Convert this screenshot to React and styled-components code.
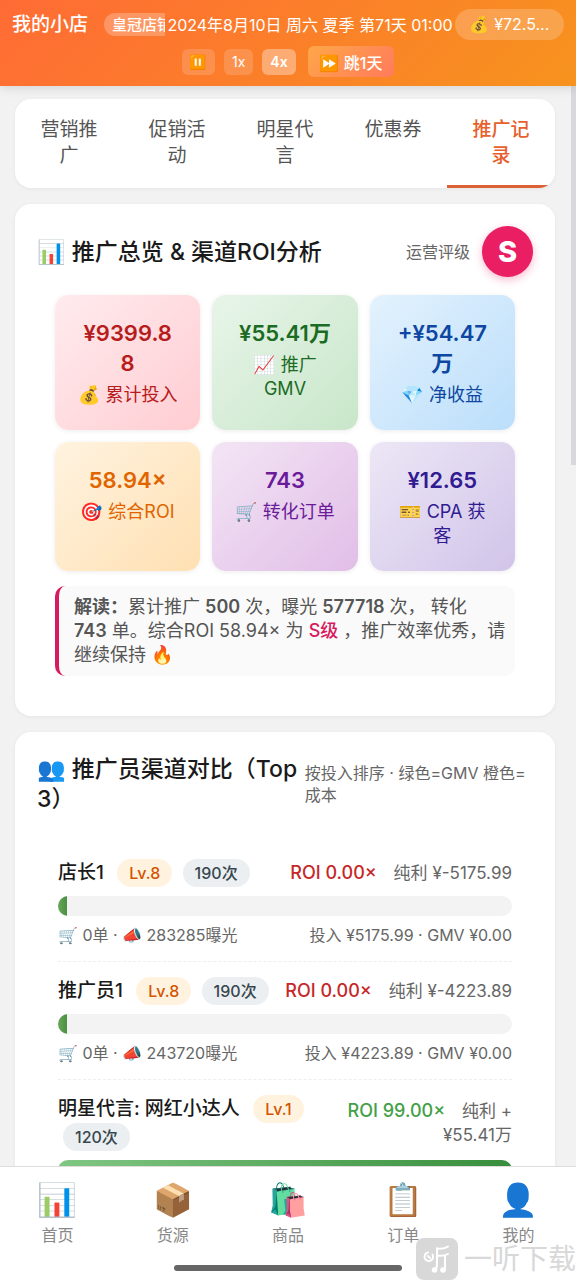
import React from 'react';
import styled, { createGlobalStyle } from 'styled-components';

const GlobalStyle = createGlobalStyle`
    * {
        box-sizing: border-box;
    }
    body {
        margin: 0;
        background: #f2f2f2;
        color: #1a1a1a;
        font-family: Inter, "Noto Sans CJK SC", "Noto Color Emoji", sans-serif;
    }
    button {
        font-family: inherit;
        border: none;
        cursor: pointer;
    }
    h1, h2, p, ul {
        margin: 0;
        padding: 0;
    }
`;

const Page = styled.div`
    height: 100vh;
    display: flex;
    flex-direction: column;
    position: relative;
`;

/* ---------- top bar ---------- */

const TopBar = styled.header`
    display: flex;
    flex-direction: column;
    gap: 6px;
    padding: 9px 12px;
    color: white;
    background: linear-gradient(135deg, #ff6b35, #f7931e);
    box-shadow: 0 2px 10px rgba(0, 0, 0, 0.12);
    z-index: 1;
`;

const ShopRow = styled.div`
    display: flex;
    align-items: center;
    height: 31px;
    white-space: nowrap;
`;

const ShopInfo = styled.div`
    flex: 1;
    min-width: 0;
    display: flex;
    align-items: center;
    gap: 16px;
    overflow: hidden;
`;

const ShopName = styled.h1`
    font-size: 19px;
    font-weight: 500;
    line-height: 24px;
`;

const ShopLevel = styled.span`
    padding: 0 8px;
    border-radius: 12px;
    font-size: 15px;
    font-weight: 500;
    line-height: 23px;
    background: rgba(255, 255, 255, 0.25);
`;

const Clock = styled.time`
    min-width: 290px;
    font-size: 16px;
    line-height: 24px;
    text-align: center;
`;

const Money = styled.div`
    width: 109px;
    border-radius: 16px;
    font-size: 16px;
    line-height: 31px;
    text-align: center;
    background: rgba(255, 255, 255, 0.2);
`;

const SpeedRow = styled.div`
    display: flex;
    align-items: center;
    justify-content: center;
    gap: 9px;
    height: 31px;
`;

const SpeedButton = styled.button`
    height: 26px;
    padding: 0 8px;
    border-radius: 6px;
    color: white;
    font-size: 14px;
    font-weight: ${(p) => (p.$active ? 600 : 400)};
    background: rgba(255, 255, 255, ${(p) => (p.$active ? 0.35 : 0.16)});
`;

const JumpButton = styled.button`
    height: 31px;
    margin-left: 3px;
    padding: 0 12px;
    border-radius: 6px;
    color: white;
    font-size: 16px;
    font-weight: 500;
    background: linear-gradient(135deg, #ffa748, #ff7a5c);
`;

/* ---------- content ---------- */

const Content = styled.main`
    flex: 1;
    min-height: 0;
    display: flex;
    flex-direction: column;
    gap: 16px;
    padding: 13px 21px 16px 15px;
    overflow-y: auto;
    scrollbar-width: none;
    > * {
        flex-shrink: 0;
    }
`;

const ScrollThumb = styled.div`
    position: absolute;
    top: 86px;
    right: 0;
    width: 5px;
    height: 379px;
    background: #d9d9db;
`;

const Tabs = styled.nav`
    display: flex;
    border-radius: 16px;
    overflow: hidden;
    background: white;
    box-shadow: 0 1px 4px rgba(0, 0, 0, 0.06);
`;

const Tab = styled.button`
    flex: 1;
    display: flex;
    justify-content: center;
    padding: 18px 22px 16px;
    color: ${(p) => (p.$active ? '#e8602c' : '#555')};
    font-size: 19px;
    font-weight: ${(p) => (p.$active ? 500 : 400)};
    line-height: 26px;
    background: none;
    border-bottom: 3px solid ${(p) => (p.$active ? '#dc6236' : 'transparent')};
`;

const Card = styled.section`
    padding: 22px;
    border-radius: 16px;
    background: white;
    box-shadow: 0 1px 4px rgba(0, 0, 0, 0.06);
`;

const CardHead = styled.div`
    display: flex;
    align-items: center;
    justify-content: space-between;
`;

const CardTitle = styled.h2`
    flex: 1;
    font-size: 23px;
    font-weight: 500;
    line-height: 30px;
`;

const Hint = styled.span`
    color: #666;
    font-size: 16px;
    line-height: 22px;
`;

const SideHint = styled(Hint)`
    flex-shrink: 0;
    max-width: 46%;
`;

const Rating = styled.div`
    display: flex;
    align-items: center;
    gap: 12px;
`;

const Grade = styled.strong`
    width: 51px;
    height: 51px;
    border-radius: 50%;
    color: white;
    font-size: 29px;
    font-weight: 800;
    line-height: 51px;
    text-align: center;
    background: #e91e63;
    box-shadow: 0 3px 8px rgba(233, 30, 99, 0.3);
`;

const CardBody = styled.div`
    padding: 18px;
`;

const StatGrid = styled.div`
    display: grid;
    grid-template-columns: repeat(3, 1fr);
    gap: 12px;
`;

const Stat = styled.div`
    display: flex;
    flex-direction: column;
    gap: 5px;
    padding: 23px 22px;
    border-radius: 14px;
    text-align: center;
    color: ${(p) => p.$color};
    background: linear-gradient(135deg, ${(p) => p.$from}, ${(p) => p.$to});
    box-shadow: 0 1px 5px rgba(0, 0, 0, 0.08);
`;

const StatValue = styled.div`
    padding: 0 3px;
    font-size: 22px;
    font-weight: 600;
    line-height: 30px;
    word-break: break-all;
`;

const StatLabel = styled.div`
    font-size: 18px;
    line-height: 24px;
`;

const Summary = styled.p`
    margin-top: 15px;
    padding: 9px 9px 9px 15px;
    border-left: 4px solid #d81b60;
    border-radius: 10px;
    color: #555;
    font-size: 18px;
    line-height: 24px;
    background: #fafafa;
    b {
        font-weight: 600;
    }
    em {
        color: #d81b60;
        font-style: normal;
        font-weight: 500;
    }
`;

/* ---------- promoter list ---------- */

const PromoterList = styled.ul`
    padding: 30px 21px 18px;
    list-style: none;
`;

const Promoter = styled.li`
    padding: 15px 0 14px;
    border-bottom: 1px dashed #eee;
`;

const PromoterHead = styled.div`
    display: flex;
    align-items: center;
    justify-content: space-between;
    gap: 4px;
    margin-bottom: 9px;
`;

const PromoterInfo = styled.div`
    font-size: 19px;
    line-height: 28px;
`;

const PromoterName = styled.span`
    margin-right: 3px;
    font-weight: 500;
`;

const Badge = styled.span`
    display: inline-block;
    margin-left: 5px;
    padding: 0 12px;
    border-radius: 14px;
    color: ${(p) => (p.$level ? '#d35400' : '#37474f')};
    font-size: 16px;
    font-weight: 500;
    background: ${(p) => (p.$level ? '#fff3e0' : '#eceff1')};
`;

const Profit = styled.div`
    color: #666;
    font-size: 17px;
    line-height: 24px;
    text-align: right;
`;

const Roi = styled.span`
    margin-right: 12px;
    color: ${(p) => (p.$good ? '#43a047' : '#c62828')};
    font-size: 18px;
    font-weight: 500;
`;

const Track = styled.div`
    height: 20px;
    border-radius: 10px;
    overflow: hidden;
    background: #f3f3f3;
`;

const Fill = styled.div`
    height: 100%;
    background: linear-gradient(90deg, ${(p) => (p.$good ? '#81c784, #388e3c' : '#66a858, #4b8f42')});
`;

const PromoterMeta = styled.div`
    display: flex;
    justify-content: space-between;
    margin-top: 7px;
    color: #666;
    font-size: 16px;
    line-height: 24px;
`;

/* ---------- bottom bar ---------- */

const BottomBar = styled.nav`
    display: flex;
    height: 114px;
    padding-top: 13px;
    border-top: 1px solid #ddd;
    background: white;
`;

const BottomLink = styled.a`
    flex: 1;
    display: flex;
    flex-direction: column;
    align-items: center;
    gap: 3px;
    color: #888;
    font-size: 16px;
    line-height: 24px;
    text-decoration: none;
`;

const BottomIcon = styled.span`
    font-size: 32px;
    line-height: 40px;
`;

const HomeIndicator = styled.div`
    position: absolute;
    bottom: 9px;
    left: 50%;
    width: 228px;
    height: 6px;
    margin-left: -114px;
    border-radius: 3px;
    background: #666;
`;

const Watermark = styled.div`
    position: absolute;
    right: 0;
    bottom: 0;
    display: flex;
    align-items: center;
    gap: 6px;
    color: #d8d8d8;
    font-size: 28px;
    line-height: 42px;
`;

const tabs = ['营销推广', '促销活动', '明星代言', '优惠券', '推广记录'];

const stats = [
    { value: '¥9399.88', label: '💰 累计投入', color: '#b71c1c', from: '#ffebee', to: '#ffcdd2' },
    { value: '¥55.41万', label: '📈 推广 GMV', color: '#1b6b24', from: '#e8f5e9', to: '#c8e6c9' },
    { value: '+¥54.47万', label: '💎 净收益', color: '#0d47a1', from: '#e3f2fd', to: '#bbdefb' },
    { value: '58.94×', label: '🎯 综合ROI', color: '#e06500', from: '#fff3e0', to: '#ffe0b2' },
    { value: '743', label: '🛒 转化订单', color: '#6a1b9a', from: '#f3e5f5', to: '#e1bee7' },
    { value: '¥12.65', label: '🎫 CPA 获客', color: '#311b92', from: '#ede7f6', to: '#d1c4e9' },
];

const promoters = [
    { name: '店长1', level: 8, times: 190, roi: '0.00', profit: '¥-5175.99', orders: 0, views: 283285, cost: '¥5175.99', gmv: '¥0.00', percent: 2 },
    { name: '推广员1', level: 8, times: 190, roi: '0.00', profit: '¥-4223.89', orders: 0, views: 243720, cost: '¥4223.89', gmv: '¥0.00', percent: 2 },
    { name: '明星代言: 网红小达人', level: 1, times: 120, roi: '99.00', profit: '+¥55.41万', percent: 100, good: true },
];

const links = [
    { icon: '📊', text: '首页' },
    { icon: '📦', text: '货源' },
    { icon: '🛍️', text: '商品' },
    { icon: '📋', text: '订单' },
    { icon: '👤', text: '我的' },
];

const PromoterRow = ({ item }) => (
    <Promoter>
        <PromoterHead>
            <PromoterInfo>
                <PromoterName>{item.name}</PromoterName> <Badge $level>Lv.{item.level}</Badge> <Badge>{item.times}次</Badge>
            </PromoterInfo>
            <Profit>
                <Roi $good={item.good}>ROI {item.roi}×</Roi> 纯利 {item.profit}
            </Profit>
        </PromoterHead>
        <Track>
            <Fill $good={item.good} style={{ width: `${item.percent}%` }} />
        </Track>
        {item.cost && (
            <PromoterMeta>
                <span>🛒 {item.orders}单 · 📣 {item.views}曝光</span>
                <span>投入 {item.cost} · GMV {item.gmv}</span>
            </PromoterMeta>
        )}
    </Promoter>
);

const WatermarkLogo = () => (
    <svg width="42" height="42" viewBox="0 0 42 42" fill="none" stroke="white" strokeWidth="2" strokeLinecap="round">
        <rect width="42" height="42" rx="8" fill="#d8d8d8" stroke="none" />
        <path d="M12 14.500a4.300 4.300 0 1 0 4.500 2M12 18l2 2" />
        <path d="M32 8.500c-3 2.500-7 2.500-11 2v13c0 3-.3 6-1 9" />
        <path d="M21 17.500c4 .5 8 .3 11-1.500M29 18v14" />
        <circle cx="18.500" cy="32" r="1.800" fill="white" />
        <circle cx="27" cy="32" r="1.800" fill="white" />
    </svg>
);

const App = () => {
    return (
        <Page>
            <GlobalStyle />
            <TopBar>
                <ShopRow>
                    <ShopInfo>
                        <ShopName>我的小店</ShopName>
                        <ShopLevel>皇冠店铺</ShopLevel>
                    </ShopInfo>
                    <Clock>2024年8月10日 周六 夏季 第71天 01:00</Clock>
                    <Money>💰 ¥72.5...</Money>
                </ShopRow>
                <SpeedRow>
                    <SpeedButton aria-label="暂停">⏸️</SpeedButton>
                    <SpeedButton>1x</SpeedButton>
                    <SpeedButton $active>4x</SpeedButton>
                    <JumpButton>⏩ 跳1天</JumpButton>
                </SpeedRow>
            </TopBar>

            <Content>
                <Tabs>
                    {tabs.map((tab) => (
                        <Tab key={tab} $active={tab === '推广记录'}>{tab}</Tab>
                    ))}
                </Tabs>

                <Card>
                    <CardHead>
                        <CardTitle>📊 推广总览 &amp; 渠道ROI分析</CardTitle>
                        <Rating>
                            <Hint>运营评级</Hint>
                            <Grade>S</Grade>
                        </Rating>
                    </CardHead>
                    <CardBody>
                        <StatGrid>
                            {stats.map((s) => (
                                <Stat key={s.label} $color={s.color} $from={s.from} $to={s.to}>
                                    <StatValue>{s.value}</StatValue>
                                    <StatLabel>{s.label}</StatLabel>
                                </Stat>
                            ))}
                        </StatGrid>
                        <Summary>
                            <b>解读：</b>累计推广 <b>500</b> 次，曝光 <b>577718</b> 次， 转化 <b>743</b>&nbsp;单。综合ROI 58.94× 为 <em>S级</em> ，推广效率优秀，请继续保持 🔥
                        </Summary>
                    </CardBody>
                </Card>

                <Card>
                    <CardHead>
                        <CardTitle>👥 推广员渠道对比（Top 3）</CardTitle>
                        <SideHint>按投入排序 · 绿色=GMV 橙色=成本</SideHint>
                    </CardHead>
                    <PromoterList>
                        {promoters.map((item) => (
                            <PromoterRow key={item.name} item={item} />
                        ))}
                    </PromoterList>
                </Card>
            </Content>
            <ScrollThumb />

            <BottomBar>
                {links.map((link) => (
                    <BottomLink key={link.text} href="#">
                        <BottomIcon>{link.icon}</BottomIcon>
                        {link.text}
                    </BottomLink>
                ))}
            </BottomBar>
            <HomeIndicator />
            <Watermark>
                <WatermarkLogo />
                一听下载
            </Watermark>
        </Page>
    );
};

export default App;
